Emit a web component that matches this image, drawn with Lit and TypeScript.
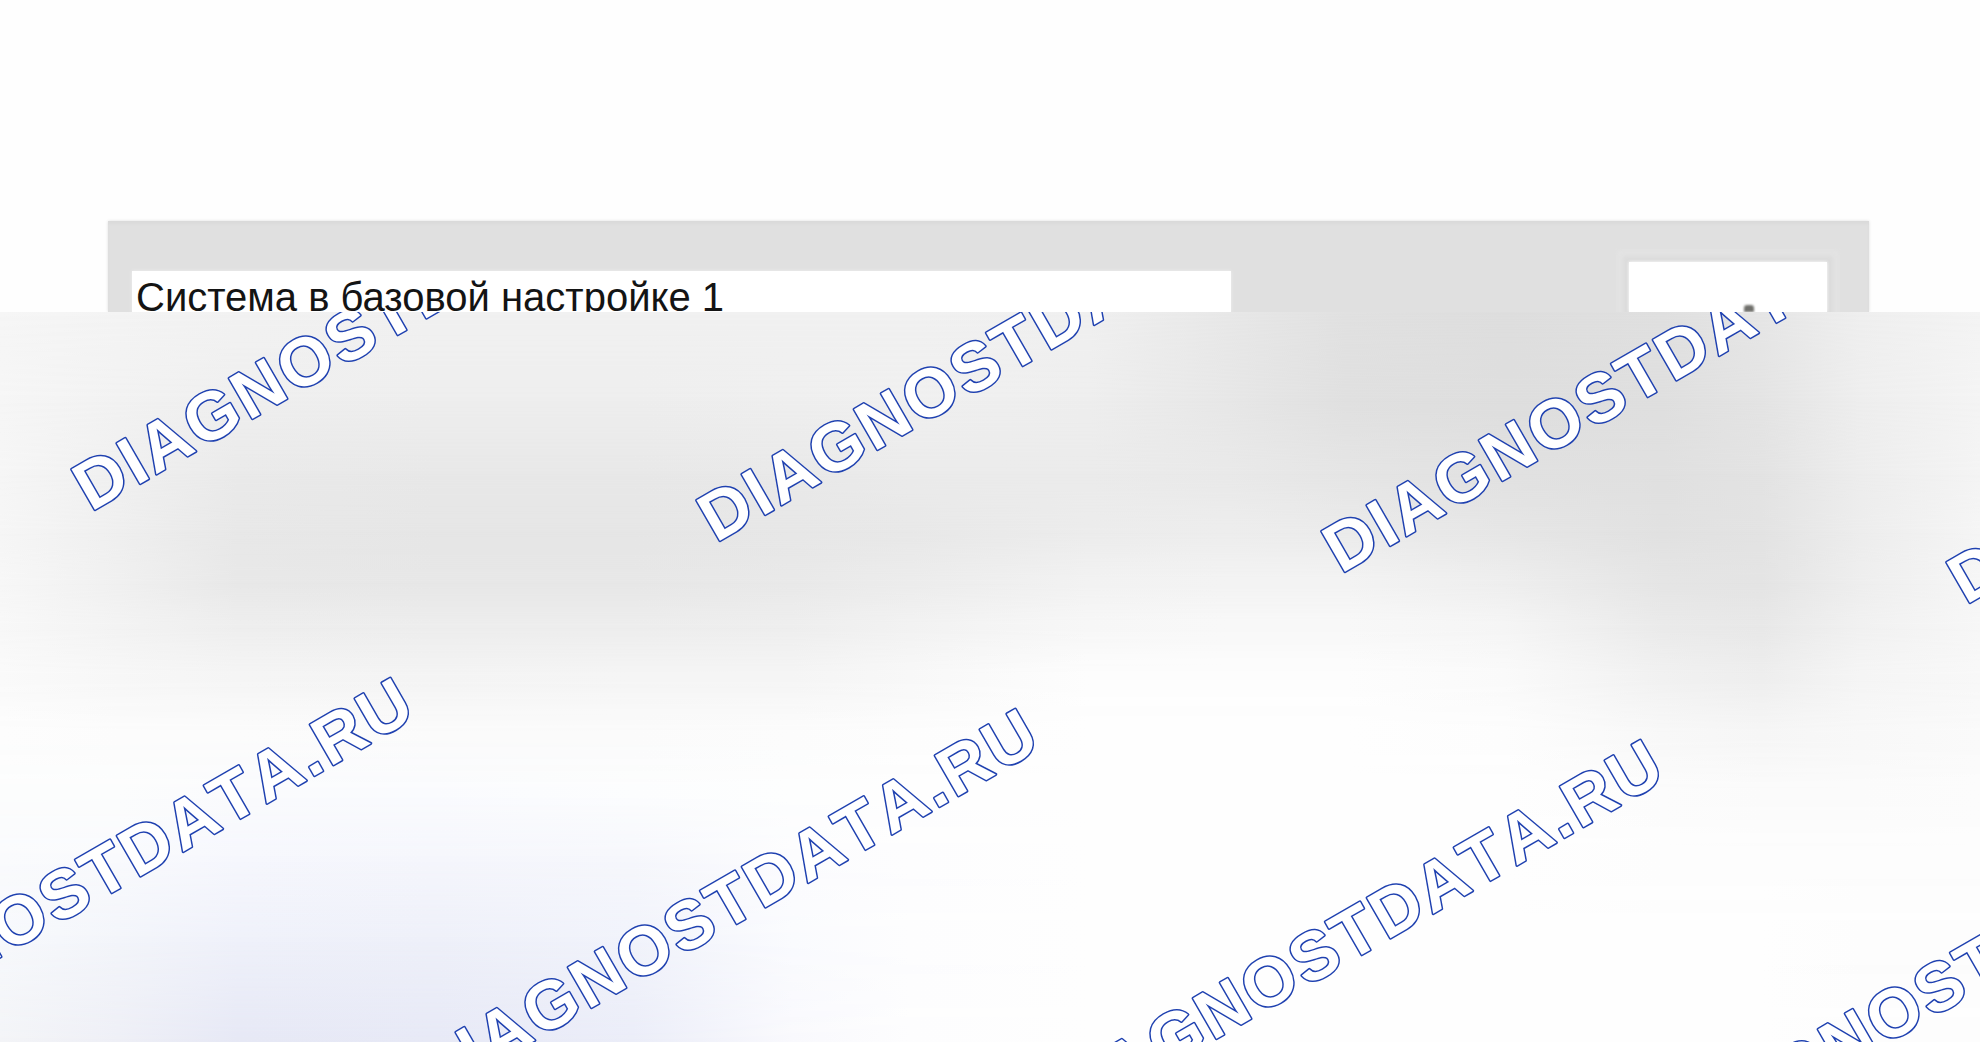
import { LitElement, html, svg, css } from "lit";
import { customElement } from "lit/decorators.js";

/** Horizontal colour stops (percent of width) shared by every backdrop row. */
const STOPS = [0, 6, 12, 22, 32, 40, 46, 55, 62, 68, 76, 84, 89, 94, 100];

/** Backdrop colours: position down the pane in percent, then one colour per stop. */
const ROWS: Array<[number, string]> = [
  [0, "f6f6f6 f4f4f4 f2f2f2 f1f1f1 f1f1f1 f1f1f1 f1f1f1 f0f0f0 e8e8e8 e1e1e1 dedede e0e0e0 e6e6e6 efefef f4f4f4"],
  [12, "f6f6f6 f2f2f2 efefef eeeeee eeeeee efefef f0f0f0 eeeeee e7e7e7 e0e0e0 dedede dfdfdf e4e4e4 eeeeee f4f4f4"],
  [22, "f6f6f6 f0f0f0 eaeaea e8e8e8 e8e8e8 e9e9e9 ebebeb ebebeb e9e9e9 e5e5e5 e1e1e1 e0e0e0 e3e3e3 ededed f4f4f4"],
  [30, "f6f6f6 efefef e8e8e8 e6e6e6 e6e6e6 e7e7e7 e8e8e8 ececec ededed ebebeb e6e6e6 e1e1e1 e3e3e3 ededed f5f5f5"],
  [37, "f7f7f7 f0f0f0 e8e8e8 e7e7e7 e7e7e7 e9e9e9 ececec f2f2f2 f3f3f3 f3f3f3 eeeeee e5e5e5 e4e4e4 eeeeee f6f6f6"],
  [43, "f8f8f8 f3f3f3 eeeeee ededed ededed eeeeee f2f2f2 f7f7f7 f8f8f8 f8f8f8 f5f5f5 eaeaea e8e8e8 f1f1f1 f7f7f7"],
  [50, "fafafa f7f7f7 f5f5f5 f4f4f4 f5f5f5 f5f5f5 f8f8f8 fdfdfd fdfdfd fdfdfd fafafa f1f1f1 eeeeee f5f5f5 f8f8f8"],
  [58, "fdfdfd fcfcfc fcfcfc fbfbfb fbfbfb fcfcfc fdfdfd fefefe fefefe fefefe fdfdfd f8f8f8 f6f6f6 f8f8f8 fafafa"],
  [66, "fcfdfd fcfdfd fafbfd fafbfe fcfdfe fdfefe fefefe fefefe fefefe fefefe fefefe fcfcfc fbfbfb fbfbfb fcfcfc"],
  [75, "fafbfd f9fafd f6f7fd f5f6fc f6f7fc fcfcfe fdfdfe fefefe fefefe fefefe fefefe fdfdfd fdfdfd fdfdfd fdfdfd"],
  [86, "f7f9fc f3f5fa eff1fa eef0f9 f1f3fb fafbfe fdfdfe fefefe fefefe fefefe fefefe fefefe fefefe fdfdfd fdfdfd"],
  [100, "f3f4f7 eeeff6 e6e8f5 e7e9f6 ebedf8 f9f9fd fdfdfe fefefe fefefe fefefe fefefe fefefe fefefe fdfdfd fdfdfd"],
];

/** Baseline start of each watermark, measured from the pane's top left corner. */
const MARKS: Array<[number, number]> = [
  [91, 200], [716, 231], [1341, 262], [1966, 293],
  [-195, 758], [430, 789], [1055, 820], [1680, 851],
];

function rowStyle(index: number): string {
  const [y, colours] = ROWS[index];
  const stops = colours.split(" ").map((c, i) => `#${c} ${STOPS[i]}%`).join(",");
  const fade = index === 0
    ? ""
    : `mask-image:linear-gradient(to bottom,transparent ${ROWS[index - 1][0]}%,#000 ${y}%);`;
  return `background:linear-gradient(to right,${stops});${fade}`;
}

@customElement("watermark-pane")
export class WatermarkPane extends LitElement {
  static styles = css`
    :host {
      display: block;
      position: relative;
      overflow: hidden;
    }
    .layer {
      position: absolute;
      inset: 0;
    }
    .marks {
      display: block;
      position: absolute;
      inset: 0;
      width: 100%;
      height: 100%;
    }
    .mark {
      font: bold 68px "Liberation Sans", Arial, sans-serif;
      font-kerning: none;
      letter-spacing: 3px;
      fill: #ffffff;
      stroke: #1f41b0;
      stroke-width: 3px;
      stroke-linejoin: round;
      paint-order: stroke;
    }
  `;

  render() {
    return html`
      ${ROWS.map((_, i) => html`<div class="layer" style=${rowStyle(i)}></div>`)}
      <svg class="marks">
        ${MARKS.map(([x, y]) => svg`
          <text class="mark" transform="translate(${x} ${y}) rotate(-30)">DIAGNOSTDATA.RU</text>`)}
      </svg>
    `;
  }
}

@customElement("status-panel")
export class StatusPanel extends LitElement {
  static styles = css`
    :host {
      display: flex;
      justify-content: space-between;
      align-items: flex-end;
      box-sizing: border-box;
      height: 91px;
      padding: 0 42px 0 24px;
      overflow: hidden;
      background: #e0e0e0;
      box-shadow: 0 0 3px #e0e0e0, inset 0 3px 3px #dadada;
    }
    .message {
      flex: 0 1 1099px;
      height: 41px;
      margin: 0;
      padding: 0 4px;
      box-sizing: border-box;
      background: #ffffff;
      box-shadow: 0 0 3px #f0f0f0;
      font: 40px/52px "Liberation Sans", Arial, sans-serif;
      color: #141414;
      white-space: nowrap;
    }
    .key {
      display: flex;
      justify-content: center;
      align-items: flex-end;
      width: 198px;
      height: 50px;
      padding-left: 42px;
      box-sizing: border-box;
      background: #ffffff;
      box-shadow: 0 0 3px #ffffff, 0 0 4px 6px #dcdcdc, 0 0 4px 12px #e3e3e3;
    }
    .tip {
      width: 10px;
      height: 7px;
      border-radius: 3px 3px 0 0;
      background: #70706c;
      filter: blur(1px);
    }
  `;

  render() {
    return html`
      <p class="message">Система в базовой настройке 1</p>
      <div class="key"><div class="tip"></div></div>
    `;
  }
}

@customElement("app-root")
export class AppRoot extends LitElement {
  static styles = css`
    :host {
      display: block;
    }
    .page {
      display: flex;
      flex-direction: column;
      min-height: 100vh;
      background: #fefefe;
    }
    .top {
      padding: 221px 111px 0 108px;
      overflow: hidden;
    }
    .pane {
      flex: 1;
    }
  `;

  render() {
    return html`
      <main class="page">
        <div class="top"><status-panel></status-panel></div>
        <watermark-pane class="pane"></watermark-pane>
      </main>
    `;
  }
}
